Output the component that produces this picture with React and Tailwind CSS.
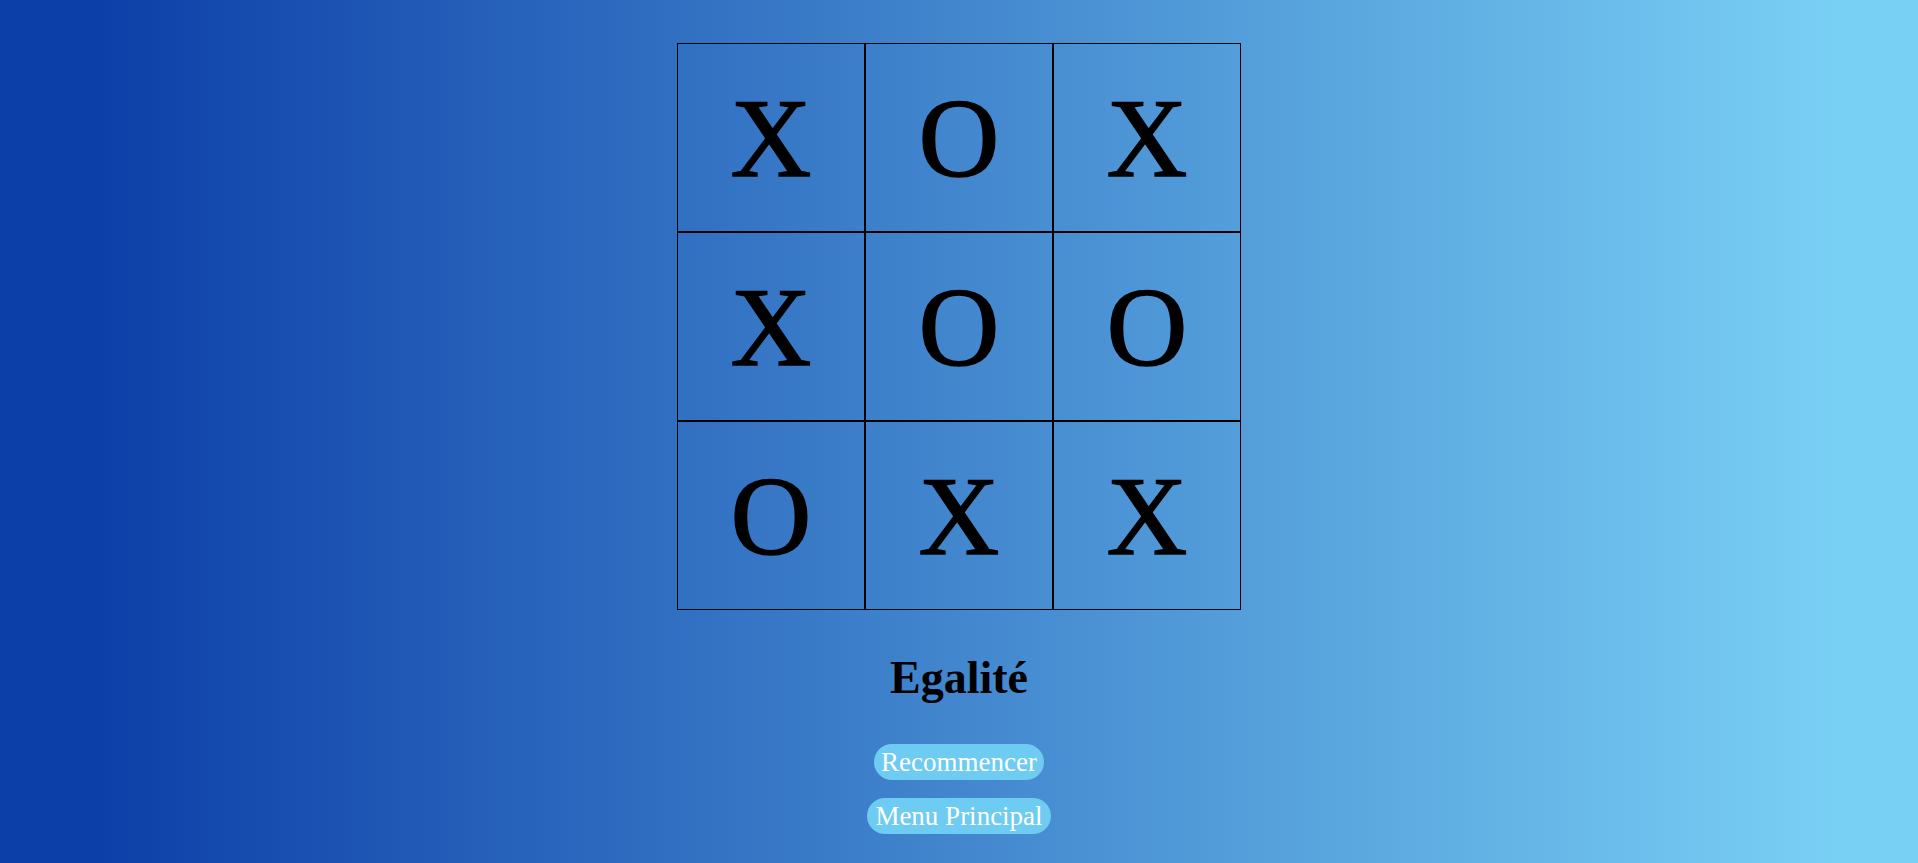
const board = ["X", "O", "X", "X", "O", "O", "O", "X", "X"];

const App = () => {
  return (
    <div className="min-h-screen w-full flex flex-col items-center bg-[linear-gradient(to_right,#0d3fa8_5%,#79d0f5_96%)] font-['Liberation_Serif',serif]">
      <div className="mt-[43px] grid grid-cols-3">
        {board.map((cell, i) => (
          <div
            key={i}
            className="w-[188px] h-[189px] border border-black flex items-center justify-center text-[112px] leading-none text-black [-webkit-text-stroke:1.5px_black]"
          >
            {cell}
          </div>
        ))}
      </div>

      <h2 className="mt-[42px] text-[46px] leading-[51px] font-bold text-black">Egalité</h2>

      <button className="mt-[41px] px-[7px] py-[3px] rounded-full bg-[#6ecbf1] text-white text-[27px] leading-[30px]">
        Recommencer
      </button>
      <button className="mt-[18px] px-[8px] py-[3px] rounded-full bg-[#6ecbf1] text-white text-[27px] leading-[30px]">
        Menu Principal
      </button>
    </div>
  );
};

export default App;
